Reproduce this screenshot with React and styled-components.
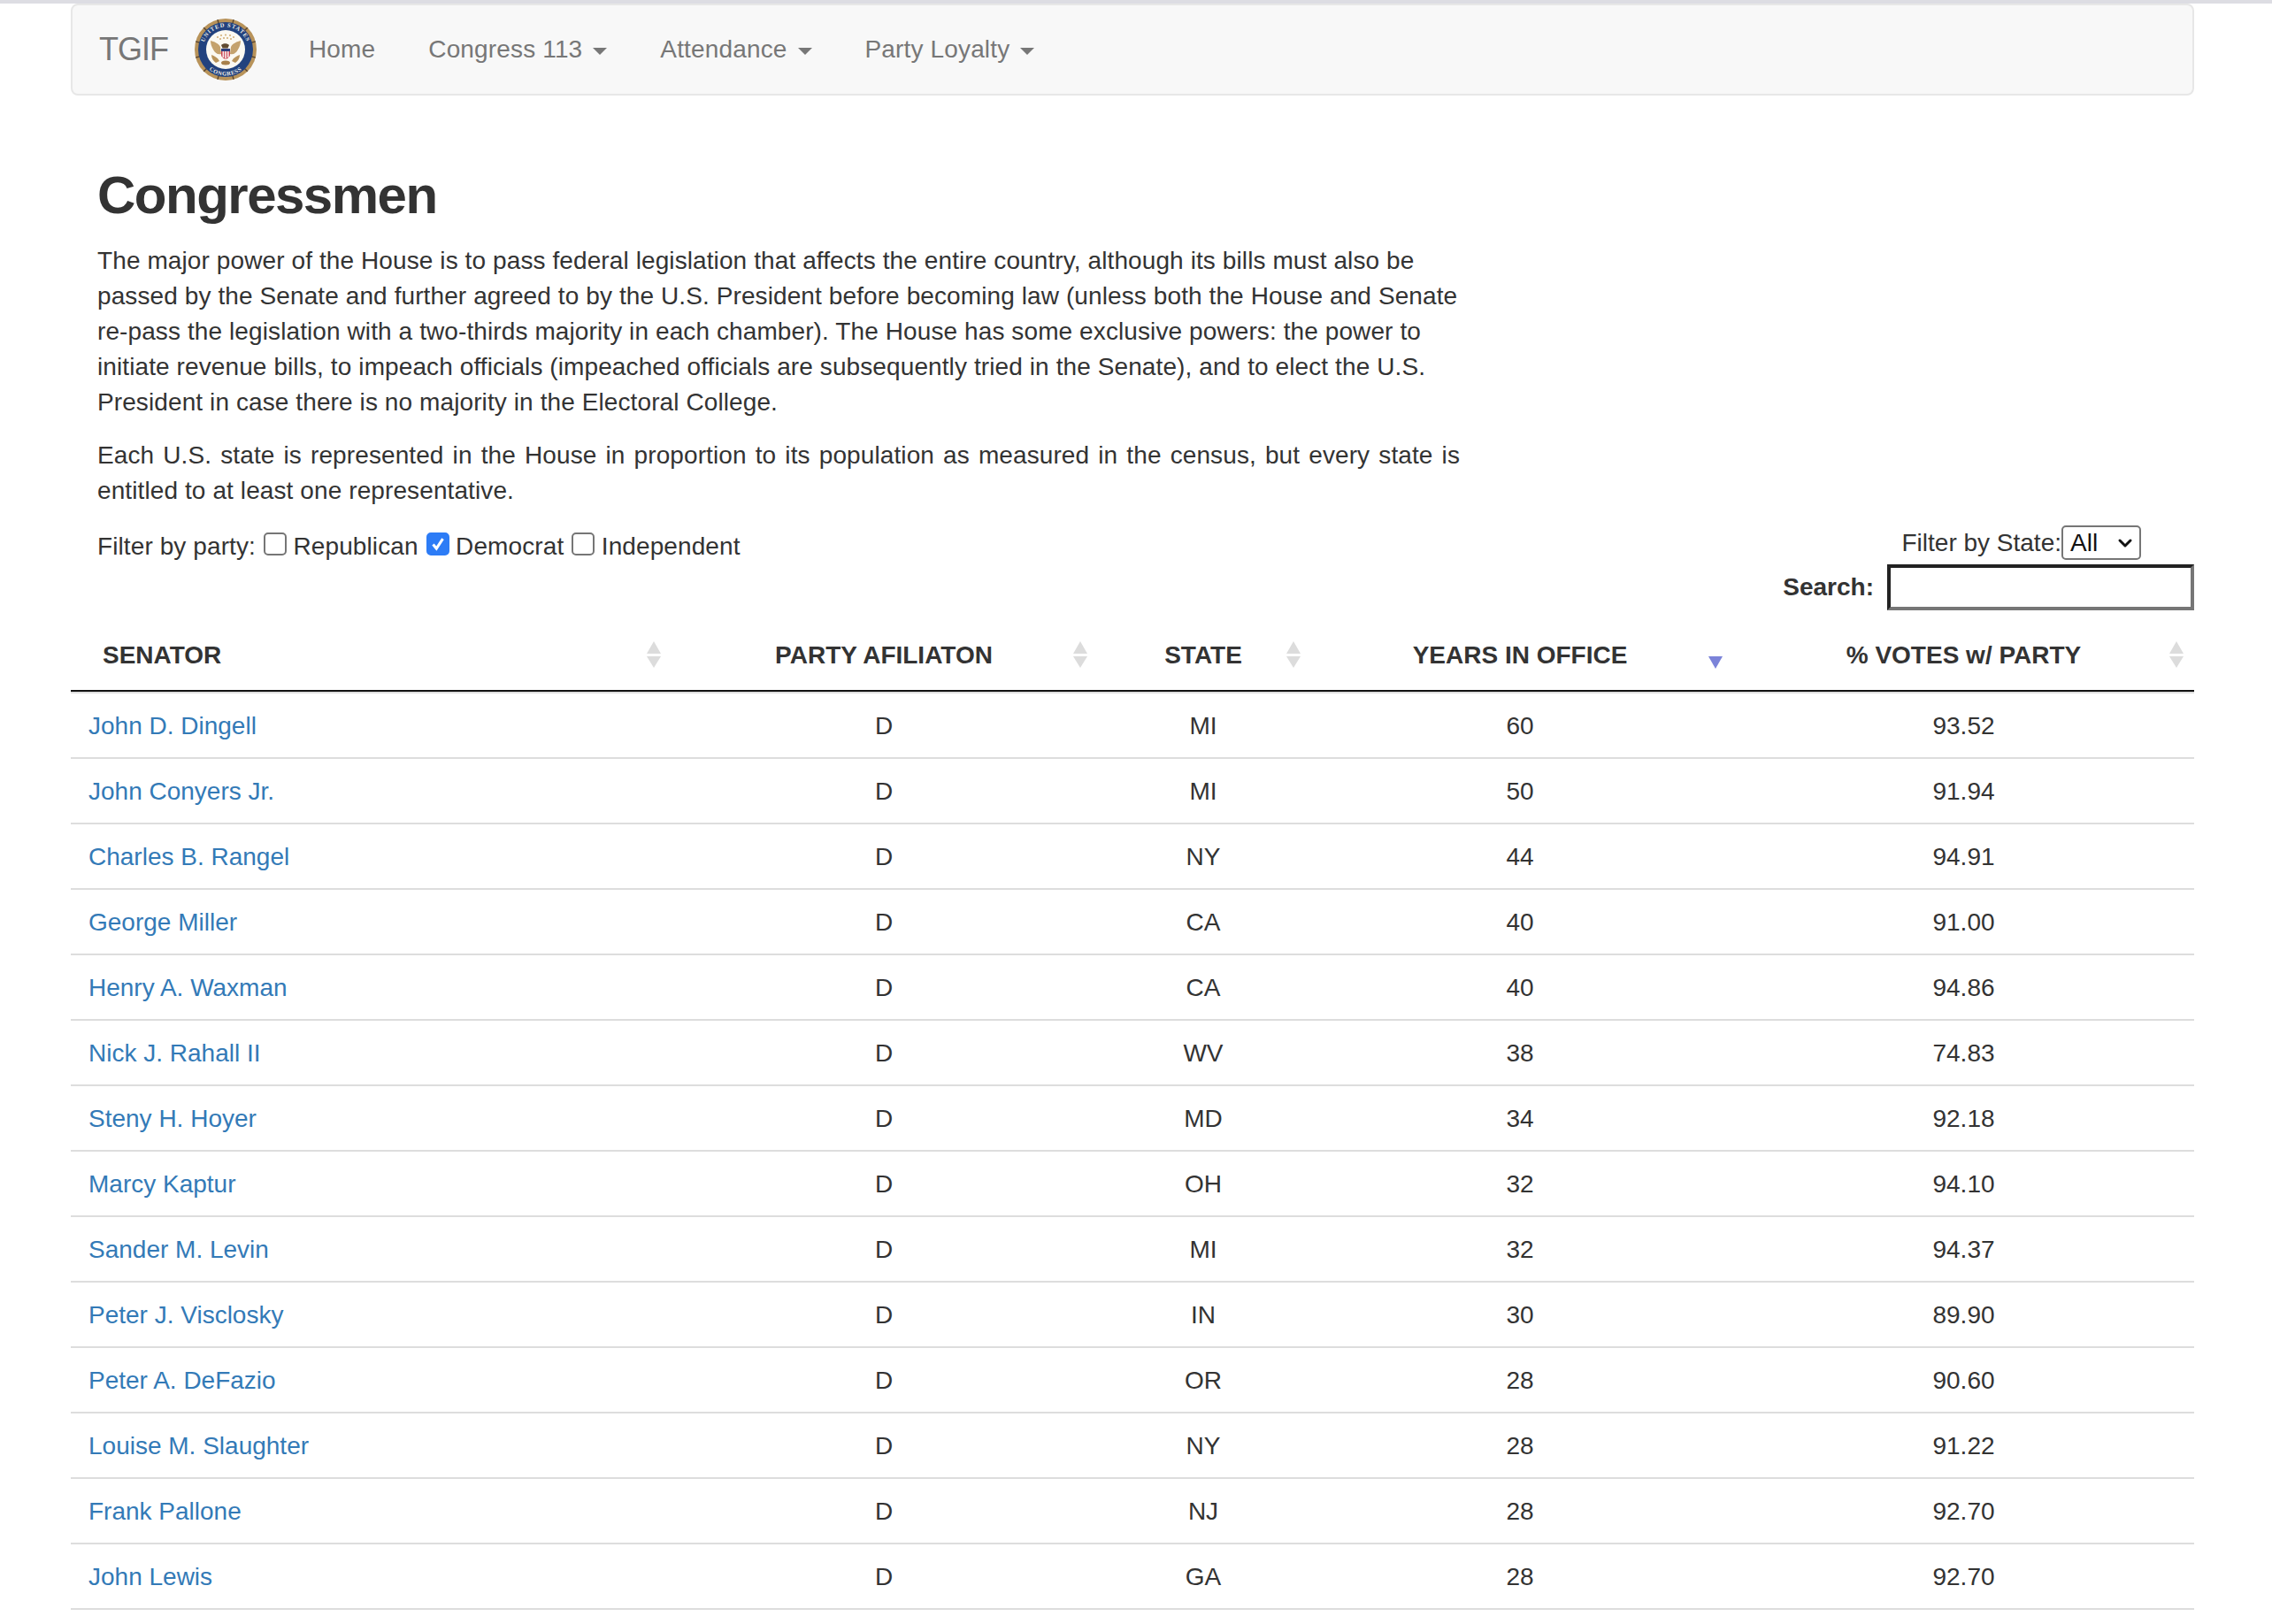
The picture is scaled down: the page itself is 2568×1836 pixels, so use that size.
import React from 'react';
import styled, { createGlobalStyle } from 'styled-components';
import { ChevronDown } from 'lucide-react';

const rows = [
  ['John D. Dingell', 'D', 'MI', 60, '93.52'],
  ['John Conyers Jr.', 'D', 'MI', 50, '91.94'],
  ['Charles B. Rangel', 'D', 'NY', 44, '94.91'],
  ['George Miller', 'D', 'CA', 40, '91.00'],
  ['Henry A. Waxman', 'D', 'CA', 40, '94.86'],
  ['Nick J. Rahall II', 'D', 'WV', 38, '74.83'],
  ['Steny H. Hoyer', 'D', 'MD', 34, '92.18'],
  ['Marcy Kaptur', 'D', 'OH', 32, '94.10'],
  ['Sander M. Levin', 'D', 'MI', 32, '94.37'],
  ['Peter J. Visclosky', 'D', 'IN', 30, '89.90'],
  ['Peter A. DeFazio', 'D', 'OR', 28, '90.60'],
  ['Louise M. Slaughter', 'D', 'NY', 28, '91.22'],
  ['Frank Pallone', 'D', 'NJ', 28, '92.70'],
  ['John Lewis', 'D', 'GA', 28, '92.70'],
];

const columns = [
  { label: 'SENATOR', width: 675, align: 'left', iconRight: 7 },
  { label: 'PARTY AFILIATON', width: 488, iconRight: 13 },
  { label: 'STATE', width: 234, iconRight: 6 },
  { label: 'YEARS IN OFFICE', width: 482, sorted: true, iconRight: 12 },
  { label: '% VOTES w/ PARTY', width: 521, iconRight: 11 },
];

const checkMark =
  "data:image/svg+xml,%3Csvg xmlns='http://www.w3.org/2000/svg' viewBox='0 0 26 26'%3E%3Cpath d='M6.500 13.500l4.500 5.500 8.500-13' fill='none' stroke='%23fff' stroke-width='3.600'/%3E%3C/svg%3E";

const GlobalStyle = createGlobalStyle`
  * {
    box-sizing: border-box;
  }

  body {
    margin: 0;
    background: #fff;
    color: #333;
    font-family: "Liberation Sans", Arial, sans-serif;
    font-size: 28px;
    line-height: 40px;
  }
`;

const Page = styled.div`
  border-top: 4px solid #dddde3;
  padding: 0 88px 0 80px;
`;

const Navbar = styled.nav`
  display: flex;
  align-items: center;
  height: 104px;
  padding: 0 30px;
  background: #f8f8f8;
  border: 2px solid #e7e7e7;
  border-radius: 8px;
`;

const Brand = styled.a`
  font-size: 36px;
  letter-spacing: -1px;
  color: #777;
  margin-right: 30px;
`;

const NavList = styled.div`
  display: flex;
  gap: 60px;
  margin-left: 59px;
`;

const NavItem = styled.a`
  display: flex;
  align-items: center;
  gap: 12px;
  color: #777;
  letter-spacing: 0.15px;
`;

const Caret = styled.span`
  width: 0;
  height: 0;
  margin-top: 4px;
  border-top: 8px solid #777;
  border-left: 8px solid transparent;
  border-right: 8px solid transparent;
`;

const Intro = styled.section`
  padding: 0 30px;
`;

const Title = styled.h2`
  margin: 80px 0 21px;
  font-size: 60px;
  line-height: 66px;
  font-weight: 700;
  letter-spacing: -1.5px;
`;

const Paragraph = styled.p`
  width: 1540px;
  margin: 0 0 20px;
  letter-spacing: 0.1px;
  text-align: ${(p) => (p.$justify ? 'justify' : 'left')};
`;

const Controls = styled.div`
  display: flex;
  justify-content: space-between;
  align-items: flex-start;
  margin: -1px 0 10px;
`;

const PartyFilter = styled.div`
  padding: 4px 0 0 30px;
  letter-spacing: 0.1px;
`;

const Check = styled.input`
  width: 26px;
  height: 26px;
  margin: 0 7.5px 0 9px;
  vertical-align: -1px;
  appearance: none;
  background: #fff;
  border: 2.5px solid #767676;
  border-radius: 5px;

  &:checked {
    background: #2d7cf6 url("${checkMark}") center / 100% no-repeat;
    border-color: #2d7cf6;
  }
`;

const RightControls = styled.div`
  display: flex;
  flex-direction: column;
  align-items: flex-end;
  gap: 5px;
`;

const StateFilter = styled.div`
  display: flex;
  align-items: center;
  height: 39px;
  margin-right: 60px;
`;

const SelectWrap = styled.div`
  position: relative;
  width: 90px;
  height: 39px;
`;

const Select = styled.select`
  width: 100%;
  height: 100%;
  padding: 0 0 0 8px;
  appearance: none;
  background: #fff;
  border: 2px solid #767676;
  border-radius: 5px;
  color: #111;
  font-family: inherit;
  font-size: 28px;
`;

const SelectArrow = styled(ChevronDown)`
  position: absolute;
  top: 8px;
  right: 6px;
  pointer-events: none;
  color: #111;
`;

const SearchRow = styled.label`
  display: flex;
  align-items: center;
  gap: 15px;
  font-weight: 700;
`;

const SearchInput = styled.input`
  width: 347px;
  height: 52px;
  background: #fff;
  border-width: 4px;
  border-style: solid;
  border-color: #222 #767676 #767676 #222;
`;

const Table = styled.table`
  width: 2400px;
  table-layout: fixed;
  border-collapse: separate;
  border-spacing: 0;
  border-bottom: 2px solid #ddd;
`;

const Th = styled.th`
  position: relative;
  padding: 21px 36px 19px;
  border-bottom: 2px solid #111;
  text-align: ${(p) => p.$align || 'center'};
  font-weight: 700;
  white-space: nowrap;
`;

const SortIcon = styled.svg`
  position: absolute;
  top: ${(p) => (p.$sorted ? '42px' : '25px')};
  right: ${(p) => p.$right}px;
`;

const Td = styled.td`
  padding: 17px 20px 15px;
  border-top: 2px solid #ddd;
  text-align: ${(p) => p.$align || 'center'};
`;

const NameLink = styled.a`
  color: #337ab7;
  text-decoration: none;
`;

const Seal = () => {
  const ticks = [];
  for (let a = 0; a < 360; a += 30) {
    ticks.push(<rect key={a} x="34.300" y="0" width="1.400" height="5" fill="#5a4630" transform={`rotate(${a + 15} 35 35)`} />);
  }
  return (
    <svg width="70" height="70" viewBox="0 0 70 70">
      <circle cx="35" cy="35" r="35" fill="#b8935a" />
      {ticks}
      <circle cx="35" cy="35" r="31" fill="#22427e" />
      <circle cx="35" cy="35" r="22" fill="#fbf9f2" />
      <path id="sealTop" d="M9.500 35a25.500 25.500 0 0 1 51 0" fill="none" />
      <path id="sealBottom" d="M5.500 35a29.500 29.500 0 0 0 59 0" fill="none" />
      <text fontFamily="Liberation Serif, serif" fontSize="6.500" fontWeight="700" fill="#f0eee6" letterSpacing="0.9">
        <textPath href="#sealTop" startOffset="50%" textAnchor="middle">UNITED STATES</textPath>
      </text>
      <text fontFamily="Liberation Serif, serif" fontSize="6.500" fontWeight="700" fill="#f0eee6" letterSpacing="0.6">
        <textPath href="#sealBottom" startOffset="50%" textAnchor="middle">CONGRESS</textPath>
      </text>
      <g fill="#d0ab72">
        <circle cx="26" cy="21" r="1" />
        <circle cx="30" cy="19" r="1" />
        <circle cx="35" cy="18.500" r="1" />
        <circle cx="40" cy="19" r="1" />
        <circle cx="44" cy="21" r="1" />
        <circle cx="29" cy="23" r="1" />
        <circle cx="33" cy="22" r="1" />
        <circle cx="37" cy="22" r="1" />
        <circle cx="41" cy="23" r="1" />
      </g>
      <path d="M18 25c4 1 9 3 11 7l1 8c-4 1-7-1-9-5-2-3-3-7-3-10z" fill="#c4a26d" />
      <path d="M52 25c-4 1-9 3-11 7l-1 8c4 1 7-1 9-5 2-3 3-7 3-10z" fill="#c4a26d" />
      <path d="M30 30c2-2.500 7-2.500 9 0l-1.500 3.500h-6z" fill="#5f4a30" />
      <path d="M19 41c3 1 7 3 9 7l-4 2c-3-2-5-5-5-9zM51 41c-3 1-7 3-9 7l4 2c3-2 5-5 5-9z" fill="#b8935a" />
      <path d="M30 34h10v7c0 2.500-2.500 4-5 5-2.500-1-5-2.500-5-5z" fill="#c8404f" />
      <path d="M31.500 37h1.700v7h-1.700zM34.200 37h1.700v8.500h-1.700zM36.900 37h1.700v7h-1.700z" fill="#f5e8e8" />
      <path d="M30 34h10v3H30z" fill="#2b3f7e" />
      <ellipse cx="35" cy="50" rx="5" ry="2.500" fill="#a8814b" />
    </svg>
  );
};

const Sort = ({ sorted, right }) =>
  sorted ? (
    <SortIcon $sorted $right={right} width="16" height="14" viewBox="0 0 16 14">
      <path d="M0 0h16L8 14z" fill="#7b83d9" />
    </SortIcon>
  ) : (
    <SortIcon $right={right} width="18" height="30" viewBox="0 0 18 30">
      <path d="M9 0l8 14H1zM1 17h16L9 30z" fill="#dcdcdc" />
    </SortIcon>
  );

export default function App() {
  return (
    <Page>
      <GlobalStyle />
      <Navbar>
        <Brand>TGIF</Brand>
        <Seal />
        <NavList>
          <NavItem>Home</NavItem>
          <NavItem>Congress 113 <Caret /></NavItem>
          <NavItem>Attendance <Caret /></NavItem>
          <NavItem>Party Loyalty <Caret /></NavItem>
        </NavList>
      </Navbar>
      <Intro>
        <Title>Congressmen</Title>
        <Paragraph>
          The major power of the House is to pass federal legislation that affects the entire country, although its bills must also be passed by the Senate and further agreed to by the U.S. President before becoming law (unless both the House and Senate re-pass the legislation with a two-thirds majority in each chamber). The House has some exclusive powers: the power to initiate revenue bills, to impeach officials (impeached officials are subsequently tried in the Senate), and to elect the U.S. President in case there is no majority in the Electoral College.
        </Paragraph>
        <Paragraph $justify>
          Each U.S. state is represented in the House in proportion to its population as measured in the census, but every state is entitled to at least one representative.
        </Paragraph>
      </Intro>
      <Controls>
        <PartyFilter>
          Filter by party:
          <Check type="checkbox" />Republican
          <Check type="checkbox" defaultChecked />Democrat
          <Check type="checkbox" />Independent
        </PartyFilter>
        <RightControls>
          <StateFilter>
            Filter by State:
            <SelectWrap>
              <Select defaultValue="All">
                <option>All</option>
              </Select>
              <SelectArrow size={24} strokeWidth={3} />
            </SelectWrap>
          </StateFilter>
          <SearchRow>
            Search:
            <SearchInput type="text" />
          </SearchRow>
        </RightControls>
      </Controls>
      <Table>
        <colgroup>
          {columns.map((c) => (
            <col key={c.label} width={c.width} />
          ))}
        </colgroup>
        <thead>
          <tr>
            {columns.map((c) => (
              <Th key={c.label} $align={c.align}>
                {c.label}
                <Sort sorted={c.sorted} right={c.iconRight} />
              </Th>
            ))}
          </tr>
        </thead>
        <tbody>
          {rows.map((r) => (
            <tr key={r[0]}>
              <Td $align="left"><NameLink href="#">{r[0]}</NameLink></Td>
              <Td>{r[1]}</Td>
              <Td>{r[2]}</Td>
              <Td>{r[3]}</Td>
              <Td>{r[4]}</Td>
            </tr>
          ))}
        </tbody>
      </Table>
    </Page>
  );
}
